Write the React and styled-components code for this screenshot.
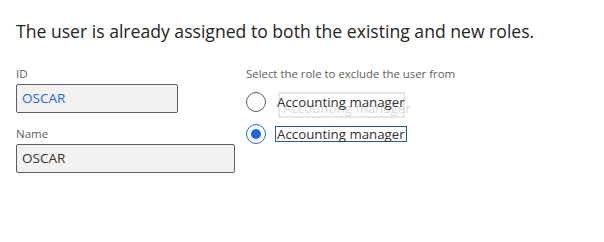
import React, { useState } from "react";
import styled, { createGlobalStyle } from "styled-components";

const GlobalStyle = createGlobalStyle`
  body {
    margin: 0;
    background: #fff;
    font-family: "Open Sans", "Liberation Sans", sans-serif;
    color: #323130;
  }
`;

const roles = [
  { id: "a", name: "Accounting manager" },
  { id: "b", name: "Accounting manager" },
];

const App = () => {
  const [selected, setSelected] = useState("b");

  return (
    <>
      <GlobalStyle />
      <Dialog>
        <Title>The user is already assigned to both the existing and new roles.</Title>
        <Body>
          <LeftColumn>
            <Field>
              <Label>ID</Label>
              <Input width="162px" className="link">OSCAR</Input>
            </Field>
            <Field>
              <Label>Name</Label>
              <Input width="219px">OSCAR</Input>
            </Field>
          </LeftColumn>
          <RightColumn>
            <Caption>Select the role to exclude the user from</Caption>
            <RadioList>
              {roles.map((r) => (
                <RadioRow key={r.id} onClick={() => setSelected(r.id)}>
                  <Circle className={selected === r.id ? "on" : ""} />
                  <RoleText className={selected === r.id ? "focus" : ""}>
                    {selected !== r.id && (
                      <DragGhost>
                        <span>{r.name}</span>
                      </DragGhost>
                    )}
                    <RoleName>{r.name}</RoleName>
                  </RoleText>
                </RadioRow>
              ))}
            </RadioList>
          </RightColumn>
        </Body>
      </Dialog>
    </>
  );
};

export default App;

const Dialog = styled.div`
  padding: 19px 16px 0 16px;
`;

const Title = styled.h2`
  margin: 0 0 24px 0;
  font-size: 17.6px;
  font-weight: 400;
  line-height: 24px;
  color: #252423;
  white-space: nowrap;
`;

const Body = styled.div`
  display: flex;
`;

const LeftColumn = styled.div`
  display: flex;
  flex-direction: column;
  gap: 14px;
  width: 230px;
`;

const Field = styled.div`
  display: flex;
  flex-direction: column;
`;

const Label = styled.div`
  font-size: 11.5px;
  line-height: 14px;
  color: #605e5c;
  margin-bottom: 3px;
`;

const Input = styled.div`
  box-sizing: border-box;
  width: ${(p) => p.width};
  height: 29px;
  background: #f3f2f1;
  border: 1px solid #605e5c;
  border-radius: 2px;
  padding: 0 5px;
  font-size: 13.5px;
  line-height: 27px;
  color: #323130;
  &.link {
    color: #2266e3;
  }
`;

const RightColumn = styled.div`
  display: flex;
  flex-direction: column;
`;

const Caption = styled.div`
  font-size: 11.4px;
  line-height: 14px;
  color: #605e5c;
  margin-bottom: 11px;
  white-space: nowrap;
`;

const RadioList = styled.div`
  display: flex;
  flex-direction: column;
  gap: 12px;
`;

const RadioRow = styled.div`
  display: flex;
  align-items: center;
  gap: 11px;
  height: 20px;
  cursor: pointer;
`;

const Circle = styled.span`
  box-sizing: border-box;
  width: 20px;
  height: 20px;
  border-radius: 50%;
  border: 1px solid #605e5c;
  background: #fff;
  position: relative;
  flex: none;
  &.on {
    border-color: #2266e3;
  }
  &.on::after {
    content: "";
    position: absolute;
    left: 4px;
    top: 4px;
    width: 10px;
    height: 10px;
    border-radius: 50%;
    background: #2266e3;
  }
`;

const RoleText = styled.span`
  position: relative;
  box-sizing: border-box;
  font-size: 13.3px;
  line-height: 16px;
  color: #323130;
  white-space: nowrap;
  &.focus {
    line-height: 14px;
    border: 1px solid #2b579a;
    margin-left: -2px;
    padding: 0 1px;
  }
`;

const RoleName = styled.span`
  position: relative;
`;

const DragGhost = styled.span`
  position: absolute;
  box-sizing: border-box;
  left: 1px;
  top: -2px;
  width: 127px;
  height: 26px;
  border: 2px solid #e8e6e4;
  padding: 6px 0 0 3px;
  color: #dcdad8;
`;
